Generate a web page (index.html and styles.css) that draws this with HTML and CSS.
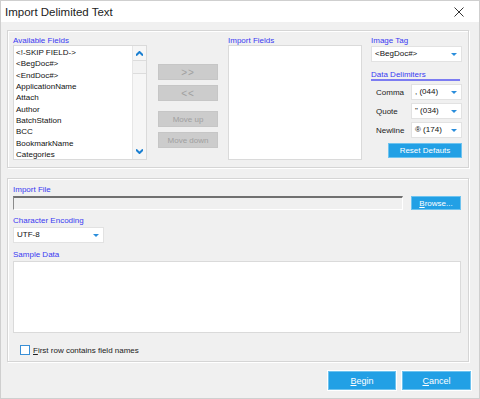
FILE: index.html
```html
<!DOCTYPE html>
<html lang="en">
<head>
    <meta charset="UTF-8">
    <title>Import Delimited Text</title>
    <link rel="stylesheet" href="styles.css">
</head>
<body>
    <div class="dialog">
        <!-- Title bar -->
        <div class="titlebar">
            <span class="title">Import Delimited Text</span>
            <svg class="close" width="10" height="10" viewBox="0 0 10 10">
                <path d="M0.5 0.5 L9.5 9.5 M9.5 0.5 L0.5 9.5" stroke="#333" stroke-width="1" fill="none"/>
            </svg>
        </div>

        <div class="content">
            <!-- Field mapping -->
            <div class="group group-fields">
                <div class="col col-list">
                    <div class="label">Available Fields</div>
                    <div class="listbox">
                        <ul class="items">
                            <li>&lt;!-SKIP FIELD-&gt;</li>
                            <li>&lt;BegDoc#&gt;</li>
                            <li>&lt;EndDoc#&gt;</li>
                            <li>ApplicationName</li>
                            <li>Attach</li>
                            <li>Author</li>
                            <li>BatchStation</li>
                            <li>BCC</li>
                            <li>BookmarkName</li>
                            <li>Categories</li>
                        </ul>
                        <div class="scrollbar">
                            <svg class="arrow-up" width="7" height="5" viewBox="0 0 7 5">
                                <path d="M0 4.5 L3.5 1 L7 4.5" stroke="#1b7fd1" stroke-width="2" fill="none"/>
                            </svg>
                            <div class="thumb"></div>
                            <svg class="arrow-down" width="7" height="5" viewBox="0 0 7 5">
                                <path d="M0 0.5 L3.5 4 L7 0.5" stroke="#1b7fd1" stroke-width="2" fill="none"/>
                            </svg>
                        </div>
                    </div>
                </div>

                <div class="col col-buttons">
                    <button class="btn-disabled btn-arrows">&gt;&gt;</button>
                    <button class="btn-disabled btn-arrows">&lt;&lt;</button>
                    <button class="btn-disabled spaced">Move up</button>
                    <button class="btn-disabled">Move down</button>
                </div>

                <div class="col col-list col-import">
                    <div class="label">Import Fields</div>
                    <div class="listbox"></div>
                </div>

                <div class="col col-options">
                    <div class="label">Image Tag</div>
                    <div class="combo combo-tag">&lt;BegDoc#&gt;<span class="caret"></span></div>

                    <div class="label delimiters">Data Delimiters</div>
                    <div class="delim-row">
                        <span class="delim-name">Comma</span>
                        <div class="combo combo-small">, (044)<span class="caret"></span></div>
                    </div>
                    <div class="delim-row">
                        <span class="delim-name">Quote</span>
                        <div class="combo combo-small">" (034)<span class="caret"></span></div>
                    </div>
                    <div class="delim-row">
                        <span class="delim-name">Newline</span>
                        <div class="combo combo-small">&reg; (174)<span class="caret"></span></div>
                    </div>
                    <button class="btn-blue btn-reset">Reset Defauts</button>
                </div>
            </div>

            <!-- File settings -->
            <div class="group group-file">
                <div class="label">Import File</div>
                <div class="file-row">
                    <div class="file-input"></div>
                    <button class="btn-blue btn-browse"><u>B</u>rowse...</button>
                </div>

                <div class="label label-gap">Character Encoding</div>
                <div class="combo combo-encoding">UTF-8<span class="caret"></span></div>

                <div class="label label-gap">Sample Data</div>
                <div class="sample"></div>

                <label class="check-row">
                    <span class="checkbox"></span>
                    <span><u>F</u>irst row contains field names</span>
                </label>
            </div>

            <!-- Dialog buttons -->
            <div class="actions">
                <button class="btn-blue btn-action"><u>B</u>egin</button>
                <button class="btn-blue btn-action btn-cancel"><u>C</u>ancel</button>
            </div>
        </div>
    </div>
</body>
</html>
```

FILE: styles.css
```css
/* General */
body {
    margin: 0;
    font-family: "Liberation Sans", Arial, sans-serif;
    font-size: 8px;
    color: #111;
}

.dialog {
    box-sizing: border-box;
    width: 480px;
    height: 399px;
    background-color: #f0f0f0;
    border: 1px solid #cfcfcf;
}

/* Title bar */
.titlebar {
    height: 21px;
    background-color: #fff;
    display: flex;
    align-items: center;
    justify-content: space-between;
    padding: 0 15px 0 4px;
}

.title {
    font-size: 11.5px;
    color: #222;
    margin-top: 1px;
}

.close {
    display: block;
    margin-top: 1px;
}

.content {
    padding: 8px 7px 0 6px;
}

/* Group boxes */
.group {
    box-sizing: border-box;
    width: 462px;
    border: 1px solid #d5d5d5;
    box-shadow: inset 1px 1px 0 #fff, 1px 1px 0 #fff;
}

.group-fields {
    height: 138px;
    display: flex;
    padding: 5px 0 0 5px;
}

.label {
    color: #3a3af2;
    line-height: 9px;
    height: 9px;
}

/* List boxes */
.col-list {
    width: 134px;
}

.listbox {
    box-sizing: border-box;
    height: 115px;
    background-color: #fff;
    border: 1px solid #dadada;
    position: relative;
    overflow: hidden;
}

.items {
    list-style: none;
    margin: 0;
    padding: 1px 0 0 2px;
    line-height: 11.33px;
}

.scrollbar {
    position: absolute;
    top: 0;
    right: 0;
    bottom: 0;
    width: 13px;
    background-color: #f6f6f6;
    border-left: 1px solid #e6e6e6;
}

.arrow-up {
    position: absolute;
    top: 5px;
    left: 3px;
}

.thumb {
    position: absolute;
    top: 14px;
    left: 0;
    right: 0;
    height: 12px;
    border-top: 1px solid #dcdcdc;
    border-bottom: 1px solid #dcdcdc;
    background-color: #f2f2f2;
}

.arrow-down {
    position: absolute;
    bottom: 5px;
    left: 3px;
}

/* Move buttons */
.col-buttons {
    width: 60px;
    margin-left: 11px;
    padding-top: 28px;
    display: flex;
    flex-direction: column;
    gap: 5px;
}

button {
    font-family: "Liberation Sans", Arial, sans-serif;
    margin: 0;
    padding: 0;
    cursor: default;
}

.btn-disabled {
    height: 16px;
    background-color: #cccccc;
    border: 1px solid #c6c6c6;
    color: #a0a0a0;
    font-size: 8px;
}

.btn-disabled.btn-arrows {
    font-size: 10px;
    letter-spacing: 1px;
}

.btn-disabled.spaced {
    margin-top: 5px;
}

.col-import {
    margin-left: 10px;
}

/* Options column */
.col-options {
    width: 91px;
    margin-left: 9px;
    display: flex;
    flex-direction: column;
}

.combo {
    box-sizing: border-box;
    height: 16px;
    background-color: #fff;
    border: 1px solid #e2e2e2;
    line-height: 14px;
    padding-left: 3px;
    position: relative;
    color: #111;
}

.caret {
    position: absolute;
    right: 4px;
    top: 6px;
    width: 0;
    height: 0;
    border-left: 3px solid transparent;
    border-right: 3px solid transparent;
    border-top: 3px solid #2a8ddb;
}

.combo-tag {
    margin-top: 1px;
}

.label.delimiters {
    margin-top: 8px;
    width: 89px;
    height: 9px;
    border-bottom: 2px solid #7c7cf2;
}

.delim-row {
    display: flex;
    align-items: center;
    margin-top: 3px;
    padding-left: 5px;
}

.delim-name {
    color: #222;
}

.combo-small {
    width: 51px;
    margin-left: auto;
}

/* Blue buttons */
.btn-blue {
    background-color: #22a0e5;
    border: 1px solid #6ec3ef;
    color: #fff;
    font-size: 8px;
}

.btn-reset {
    align-self: flex-end;
    width: 74px;
    height: 15px;
    margin-top: 5px;
}

/* File group */
.group-file {
    height: 184px;
    margin-top: 10px;
    padding: 6px 0 0 5px;
}

.file-row {
    display: flex;
    margin-top: 2px;
}

.file-input {
    box-sizing: border-box;
    width: 390px;
    height: 14px;
    background-color: #f0f0f0;
    border-top: 2px solid #707070;
    border-left: 1px solid #8a8a8a;
    border-right: 1px solid #fff;
    border-bottom: 1px solid #fff;
}

.btn-browse {
    width: 50px;
    height: 14px;
    margin-left: 8px;
}

.label-gap {
    margin-top: 6px;
}

.combo-encoding {
    width: 91px;
    margin-top: 2px;
}

.combo-encoding + .label-gap {
    margin-top: 7px;
}

.sample {
    box-sizing: border-box;
    width: 448px;
    height: 72px;
    margin-top: 2px;
    background-color: #fff;
    border: 1px solid #dadada;
}

.check-row {
    display: flex;
    align-items: center;
    gap: 3px;
    margin: 12px 0 0 7px;
    color: #222;
}

.checkbox {
    box-sizing: border-box;
    width: 10px;
    height: 10px;
    background-color: #fff;
    border: 1px solid #3a8fd6;
}

/* Dialog buttons */
.actions {
    display: flex;
    justify-content: flex-end;
    gap: 6px;
    margin-top: 9px;
    margin-right: 1px;
}

.btn-action {
    width: 68px;
    height: 19px;
    font-size: 9px;
    outline: 1px solid #fff;
}

.btn-cancel {
    width: 69px;
}
```
